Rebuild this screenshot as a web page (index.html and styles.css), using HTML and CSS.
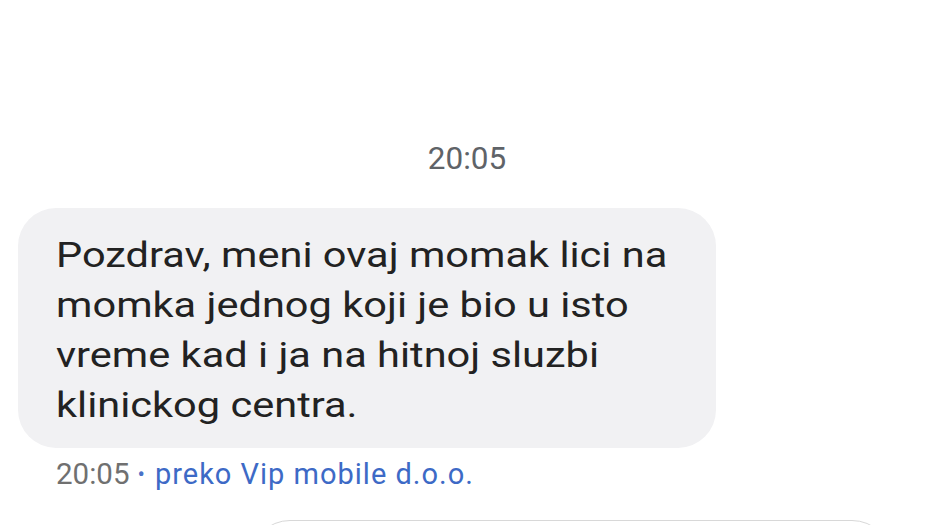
FILE: index.html
```html
<!DOCTYPE html>
<html lang="sr">
<head>
<meta charset="utf-8">
<title>Poruka</title>
<link rel="stylesheet" href="styles.css">
</head>
<body>
<div class="chat">
  <div class="date">20:05</div>
  <div class="bubble">
    <p class="text">Pozdrav, meni ovaj momak lici na<br>momka jednog koji je bio u isto<br>vreme kad i ja na hitnoj sluzbi<br>klinickog centra.</p>
  </div>
  <div class="meta"><span class="time">20:05</span><span class="dot">•</span><span class="via">preko Vip mobile d.o.o.</span></div>
  <div class="compose"></div>
</div>
</body>
</html>
```
FILE: styles.css
```css
html, body {
  margin: 0;
  padding: 0;
  background: #ffffff;
}
body {
  width: 930px;
  height: 525px;
  overflow: hidden;
  font-family: Roboto, "Noto Sans", sans-serif;
}
.chat {
  display: flex;
  flex-direction: column;
  padding-top: 140px;
}
.date {
  text-align: center;
  font-size: 31.5px;
  line-height: 38px;
  color: #5f6368;
  padding-left: 4px;
}
.bubble {
  margin-top: 30px;
  margin-left: 18px;
  width: 698px;
  box-sizing: border-box;
  background: #f1f1f3;
  border-radius: 38px;
  padding: 23px 20px 17px 38px;
}
.text {
  margin: 0;
  font-size: 35px;
  line-height: 50px;
  color: #222222;
  white-space: nowrap;
  transform: scaleX(1.187);
  transform-origin: left center;
}
.meta {
  margin-top: 9px;
  margin-left: 56px;
  font-size: 29px;
  line-height: 34px;
  white-space: nowrap;
}
.time {
  color: #707070;
  font-size: 29.5px;
}
.dot {
  color: #4a72c8;
  font-size: 22px;
  margin: 0 10px 0 8px;
  vertical-align: 2px;
}
.via {
  color: #3d6ac6;
  letter-spacing: 1px;
}
.compose {
  margin-top: 28px;
  margin-left: 250px;
  width: 642px;
  height: 80px;
  box-sizing: border-box;
  border: 1px solid #d8d8d8;
  border-radius: 40px;
}
```
